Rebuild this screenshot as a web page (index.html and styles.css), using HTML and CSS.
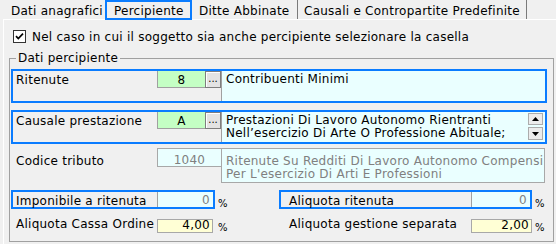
FILE: index.html
```html
<!DOCTYPE html>
<html lang="it">
<head>
  <meta charset="UTF-8" />
  <title>Percipiente</title>
  <link rel="stylesheet" href="styles.css">
</head>
<body>
  <div class="tabs">
    <div class="tab tab-1">Dati anagrafici</div>
    <div class="tab tab-2 active">Percipiente</div>
    <div class="tab tab-3">Ditte Abbinate</div>
    <div class="tab tab-4">Causali e Contropartite Predefinite</div>
  </div>

  <div class="page">
    <div class="check">
      <span class="box">
        <svg width="11" height="11" viewBox="0 0 11 11"><path d="M2 5.2 L4.3 7.6 L9 2.6" fill="none" stroke="#000" stroke-width="1.7"/></svg>
      </span>
      <span>Nel caso in cui il soggetto sia anche percipiente selezionare la casella</span>
    </div>

    <fieldset class="group">
      <legend>Dati percipiente</legend>

      <div class="row frame">
        <div class="lbl">Ritenute</div>
        <div class="code green">8</div>
        <div class="more">...</div>
        <div class="desc">Contribuenti Minimi</div>
      </div>

      <div class="row frame row-2">
        <div class="lbl">Causale prestazione</div>
        <div class="code green">A</div>
        <div class="more">...</div>
        <div class="desc">
          <div class="desc-text">Prestazioni Di Lavoro Autonomo Rientranti<br>Nell’esercizio Di Arte O Professione Abituale;</div>
          <div class="spin">
            <div class="spin-btn"><svg width="7" height="4" viewBox="0 0 7 4"><path d="M0 4 L3.5 0 L7 4 Z" fill="#000"/></svg></div>
            <div class="spin-btn"><svg width="7" height="4" viewBox="0 0 7 4"><path d="M0 0 L3.5 4 L7 0 Z" fill="#000"/></svg></div>
          </div>
        </div>
      </div>

      <div class="row row-3">
        <div class="lbl">Codice tributo</div>
        <div class="code code-off">1040</div>
        <div class="desc desc-off">Ritenute Su Redditi Di Lavoro Autonomo Compensi<br>Per L'esercizio Di Arti E Professioni</div>
      </div>

      <div class="pairs">
        <div class="cell">
          <div class="frame small frame-left">
            <div class="lbl">Imponibile a ritenuta</div>
            <div class="num num-off">0</div>
          </div>
          <span class="pct">%</span>
        </div>
        <div class="cell">
          <div class="frame small frame-right">
            <div class="lbl">Aliquota ritenuta</div>
            <div class="num num-off">0</div>
          </div>
          <span class="pct">%</span>
        </div>
        <div class="cell plain plain-left">
          <div class="lbl">Aliquota Cassa Ordine</div>
          <div class="num num-edit">4,00</div>
          <span class="pct">%</span>
        </div>
        <div class="cell plain plain-right">
          <div class="lbl">Aliquota gestione separata</div>
          <div class="num num-edit">2,00</div>
          <span class="pct">%</span>
        </div>
      </div>
    </fieldset>
  </div>
</body>
</html>
```
FILE: styles.css
```css
* {
  box-sizing: border-box;
}
body {
  margin: 0;
  width: 556px;
  height: 244px;
  overflow: hidden;
  background: #f0f0f0;
  color: #000;
  font-family: "DejaVu Sans", sans-serif;
  font-size: 12px;
  letter-spacing: 0.25px;
}

/* tab strip */
.tabs {
  display: flex;
  height: 19px;
  padding-left: 4px;
}
.tab {
  height: 19px;
  padding: 2px 0 0 7px;
  line-height: 18px;
  white-space: nowrap;
}
.tab-1 { width: 101px; }
.tab-2 { width: 87px; }
.tab-3 {
  width: 106px;
  border-right: 1px solid #7a7a7a;
}
.tab-4 {
  width: 229px;
  padding-left: 6px;
  border-right: 1px solid #7a7a7a;
}
.tab.active {
  position: relative;
  z-index: 1;
  height: 20px;
  padding: 0 0 0 7px;
  border: 2px solid #0a7cff;
}

/* page */
.page {
  height: 225px;
  margin-left: 3px;
  border-top: 1px solid #fff;
  border-left: 1px solid #fff;
}
.check {
  display: flex;
  gap: 6px;
  padding: 10px 0 0 9px;
  line-height: 15px;
  height: 25px;
}
.box {
  width: 13px;
  height: 13px;
  border: 1px solid #333;
  background: #fff;
  display: flex;
}
.group {
  margin: 6px 2px 0 5px;
  padding: 3px 6px 0 1px;
  min-width: 0;
  height: 191px;
  border: 1px solid #a0a0a0;
}
.group legend {
  margin-left: 5px;
  padding: 0 2px;
  line-height: 15px;
}

/* rows with code + description */
.row {
  display: flex;
}
.frame {
  border: 2px solid #0a7cff;
}
.row.frame {
  height: 34px;
}
.row-2 {
  margin-top: 7px;
}
.row-3 {
  margin-top: 4px;
  padding: 0 2px;
  height: 35px;
}
.lbl {
  width: 144px;
  padding: 1px 0 0 3px;
  line-height: 16px;
  white-space: nowrap;
}
.row-3 .lbl {
  padding-top: 5px;
}
.code {
  width: 48px;
  height: 17px;
  padding-top: 1px;
  line-height: 16px;
  text-align: center;
}
.green {
  background: #c4ffc4;
  border-left: 1px solid #a0a0a0;
  border-bottom: 1px solid #a0a0a0;
}
.more {
  width: 16px;
  height: 17px;
  background: #e3e3e3;
  border: 1px solid #7e7e7e;
  box-shadow: inset 1px 1px #fff;
  font-size: 10px;
  letter-spacing: 0;
  line-height: 14px;
  text-align: center;
}
.desc {
  flex: 1;
  display: flex;
  background: #eaffff;
  border-left: 1px solid #a0a0a0;
  padding: 2px 0 0 4px;
  line-height: 13px;
  white-space: nowrap;
}
.desc-text {
  flex: 1;
}
.spin {
  display: flex;
  flex-direction: column;
  gap: 2px;
  margin: -1px 2px 0 0;
}
.spin-btn {
  width: 15px;
  height: 12px;
  background: #ececec;
  border: 1px solid #acacac;
  display: flex;
  align-items: center;
  justify-content: center;
}
.spin-btn + .spin-btn {
  height: 13px;
}
.code-off {
  width: 64px;
  height: 19px;
  padding-top: 4px;
  line-height: 15px;
  background: #eaffff;
  border: 1px solid #a8a8a8;
  border-right: none;
  color: #808080;
}
.desc-off {
  border: 1px solid #a8a8a8;
  padding-top: 6px;
  color: #808080;
}

/* percent fields */
.pairs {
  display: grid;
  grid-template-columns: 268px 1fr;
  row-gap: 10px;
  margin-top: 7px;
}
.cell {
  display: flex;
}
.small {
  display: flex;
  height: 19px;
}
.frame-left { width: 204px; }
.frame-right { width: 253px; }
.frame-right .lbl { width: 190px; padding-left: 8px; }
.num {
  flex: 1;
  padding-right: 3px;
  text-align: right;
}
.num-off {
  background: #eaffff;
  border-left: 1px solid #a0a0a0;
  color: #808080;
  line-height: 15px;
  padding-top: 1px;
}
.pct {
  margin-left: 3px;
  padding-top: 8px;
  font-size: 10px;
  letter-spacing: 0;
}
.plain .lbl {
  line-height: 10px;
  padding: 0 0 0 5px;
  width: 146px;
}
.plain-right .lbl {
  width: 192px;
  padding-left: 10px;
}
.num-edit {
  flex: none;
  height: 14px;
  line-height: 10px;
  background: #ffffd5;
  border: 1px solid #a8a8a8;
  padding-right: 2px;
}
.plain-left .num-edit { width: 56px; }
.plain-right .num-edit { width: 61px; }
.plain .pct {
  margin-left: 5px;
  padding-top: 3px;
}
.plain-right .pct {
  margin-left: 3px;
}
```
